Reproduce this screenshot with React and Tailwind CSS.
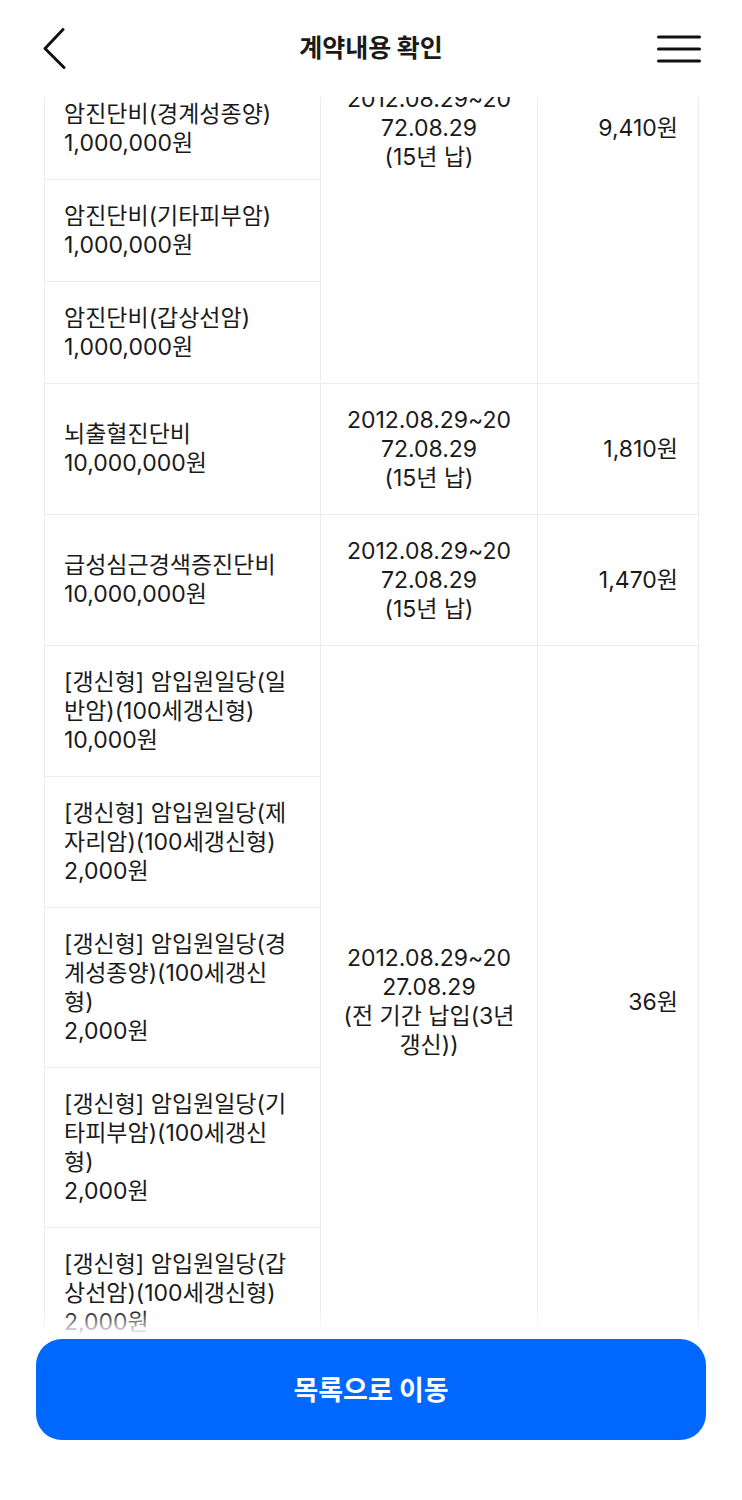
import { useState } from 'react';

const groups = [
  {
    items: [
      '암진단비(일반암)\n10,000,000원',
      '암진단비(제자리암)\n1,000,000원',
      '암진단비(경계성종양)\n1,000,000원',
      '암진단비(기타피부암)\n1,000,000원',
      '암진단비(갑상선암)\n1,000,000원',
    ],
    period: '2012.08.29~20\n72.08.29\n(15년 납)',
    premium: '9,410원',
  },
  {
    items: ['뇌출혈진단비\n10,000,000원'],
    period: '2012.08.29~20\n72.08.29\n(15년 납)',
    premium: '1,810원',
  },
  {
    items: ['급성심근경색증진단비\n10,000,000원'],
    period: '2012.08.29~20\n72.08.29\n(15년 납)',
    premium: '1,470원',
  },
  {
    items: [
      '[갱신형] 암입원일당(일\n반암)(100세갱신형)\n10,000원',
      '[갱신형] 암입원일당(제\n자리암)(100세갱신형)\n2,000원',
      '[갱신형] 암입원일당(경\n계성종양)(100세갱신\n형)\n2,000원',
      '[갱신형] 암입원일당(기\n타피부암)(100세갱신\n형)\n2,000원',
      '[갱신형] 암입원일당(갑\n상선암)(100세갱신형)\n2,000원',
    ],
    period: '2012.08.29~20\n27.08.29\n(전 기간 납입(3년\n갱신))',
    premium: '36원',
  },
];

function BackIcon() {
  return (
    <svg width="26" height="42" viewBox="0 0 26 42" fill="none">
      <path d="M20 1.5 L2 20.5 L21 39.5" stroke="#111" strokeWidth="3" strokeLinecap="round" strokeLinejoin="round" />
    </svg>
  );
}

function MenuIcon() {
  return (
    <svg width="44" height="30" viewBox="0 0 44 30" fill="none">
      <path d="M1.5 3 H42.5 M1.5 15 H42.5 M1.5 27 H42.5" stroke="#111" strokeWidth="3" strokeLinecap="round" />
    </svg>
  );
}

function CoverageGroup({ group }) {
  return (
    <div className="grid grid-cols-[275px_217px_1fr] border-b border-[#ececec]">
      <div className="flex flex-col">
        {group.items.map((item, i) => (
          <div
            key={i}
            className={`flex flex-1 items-center pl-[19px] pr-3 py-[21.5px] ${i < group.items.length - 1 ? 'border-b border-[#ececec]' : ''}`}
          >
            <p className="whitespace-pre-line">{item}</p>
          </div>
        ))}
      </div>
      <div className="flex items-center justify-center border-l border-[#ececec] px-3 py-[21.5px] text-center">
        <p className="whitespace-pre-line">{group.period}</p>
      </div>
      <div className="flex items-center justify-end border-l border-[#ececec] pr-5">
        {group.premium}
      </div>
    </div>
  );
}

export default function App() {
  const [rows] = useState(groups);

  return (
    <div className="relative h-[1500px] overflow-hidden bg-white text-[#1a1a1a] font-['Inter','Noto_Sans_CJK_KR',sans-serif]">
      <header className="relative z-10 flex h-[97px] items-center justify-between bg-white pl-[43px] pr-[41px]">
        <BackIcon />
        <h1 className="absolute left-1/2 top-[47px] -translate-x-1/2 -translate-y-1/2 text-[25px] font-semibold font-['Noto_Sans_CJK_KR',sans-serif]">
          계약내용 확인
        </h1>
        <MenuIcon />
      </header>

      <div className="overflow-hidden">
        <div className="-mt-[223px] ml-[44px] mr-[43px] border-x border-[#ececec] text-[23px] leading-[29px]">
          {rows.map((g, i) => (
            <CoverageGroup key={i} group={g} />
          ))}
        </div>
      </div>

      <div className="absolute bottom-0 left-0 right-0">
        <div className="h-[24px] bg-linear-to-b from-white/0 to-white" />
        <div className="bg-white px-[36px] pt-[4px] pb-[60px]">
          <button className="flex h-[101px] w-full items-center justify-center rounded-[26px] bg-[#0067ff] text-[27px] font-semibold text-white font-['Noto_Sans_CJK_KR',sans-serif]">
            목록으로 이동
          </button>
        </div>
      </div>
    </div>
  );
}
